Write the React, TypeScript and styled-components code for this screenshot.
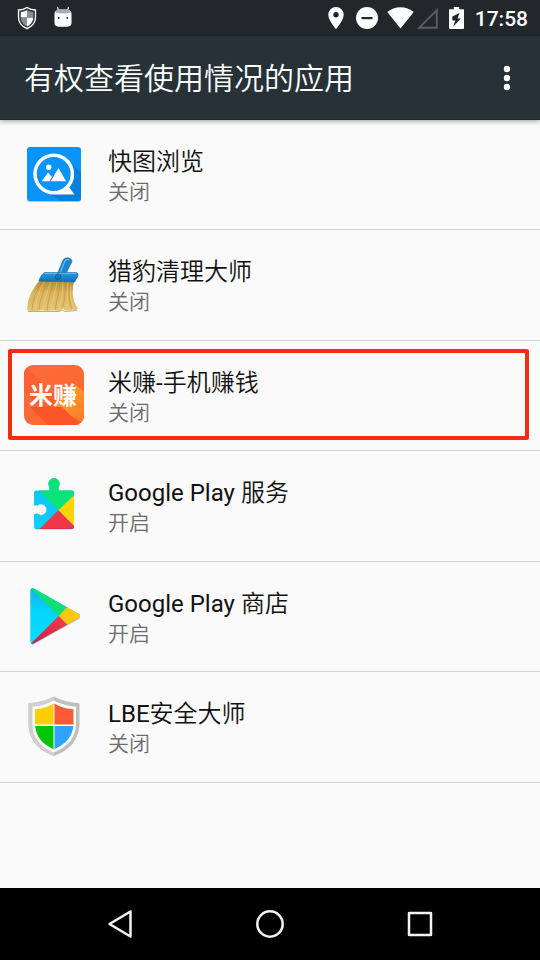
import React from 'react';
import styled, { createGlobalStyle } from 'styled-components';

const GlobalStyle = createGlobalStyle`
  *, *::before, *::after { box-sizing: border-box; }
  body {
    margin: 0;
    background: #fafafa;
    font-family: Roboto, "Noto Sans CJK SC DemiLight", "Noto Sans CJK SC", sans-serif;
  }
`;

const Screen = styled.div`
  display: flex;
  flex-direction: column;
  min-height: 100vh;
  background: #fafafa;
`;

const StatusBar = styled.div`
  display: flex;
  align-items: center;
  justify-content: space-between;
  height: 36px;
  padding: 0 12px 0 17px;
  background: #21272b;
  color: #fff;
`;

const StatusGroup = styled.div<{ $gap: number }>`
  display: flex;
  align-items: center;
  gap: ${(p) => p.$gap}px;
`;

const Clock = styled.time`
  padding-top: 2px;
  font-size: 21px;
  line-height: 24px;
  font-weight: 500;
`;

const AppBar = styled.header`
  display: flex;
  align-items: center;
  justify-content: space-between;
  height: 84px;
  padding: 0 12px 0 24px;
  background: #263238;
  border-bottom: 1px solid #1b252a;
  color: #fff;
  box-shadow: 0 1px 5px rgba(0, 0, 0, 0.4);
  z-index: 1;
`;

const Title = styled.h1`
  margin: 0;
  padding-top: 2px;
  font-size: 30px;
  line-height: 40px;
  font-weight: 350;
`;

const IconButton = styled.button`
  display: flex;
  align-items: center;
  justify-content: center;
  width: 42px;
  height: 48px;
  padding: 0;
  border: 0;
  background: none;
  color: inherit;
`;

const List = styled.ul`
  flex: 1;
  margin: 0;
  padding: 0;
  list-style: none;
`;

const Item = styled.li`
  position: relative;
  height: 110px;
  border-bottom: 1px solid #d4d4d4;
  &:nth-child(even) { height: 111px; }
`;

const Row = styled.button`
  display: flex;
  align-items: flex-start;
  gap: 24px;
  width: 100%;
  height: 100%;
  padding: 24px 24px 0;
  border: 0;
  background: none;
  font: inherit;
  text-align: left;
`;

const Labels = styled.span`
  display: flex;
  flex-direction: column;
  padding-top: 2px;
`;

const Name = styled.span`
  font-size: 24px;
  line-height: 32px;
  color: #111;
`;

const State = styled.span`
  font-size: 21px;
  line-height: 28px;
  font-weight: 350;
  color: #6c6c6c;
`;

const Highlight = styled.span`
  position: absolute;
  inset: 8px 11px 10px 8px;
  border: 4px solid #f42c12;
  border-radius: 2px;
  pointer-events: none;
`;

const NavBar = styled.nav`
  display: grid;
  grid-template-columns: repeat(3, 1fr);
  height: 72px;
  padding: 0 45px;
  background: #000;
  color: #f2f2f2;
`;

const NavButton = styled(IconButton)`
  width: 100%;
  height: 100%;
`;

const GalleryIcon = () => (
  <svg width="60" height="60" viewBox="0 0 60 60" aria-hidden="true">
    <rect x="3" y="4.5" width="54" height="53.5" rx="3" fill="#b8c4cc" />
    <rect x="3" y="3" width="54" height="54" rx="3" fill="#0a93f8" />
    <path d="M44 15.500L57 28V54a3 3 0 0 1-3 3H37L15 44Z" fill="#0881dc" />
    <circle cx="29.700" cy="30" r="18" fill="#0a93f8" />
    <path d="M29.700 9.500a20.500 20.500 0 0 1 15.500 34L50.500 50.500H29.700a20.500 20.500 0 0 1 0-41Zm0 3.500a17 17 0 1 0 0 34a17 17 0 0 0 0-34Z" fill="#fff" fillRule="evenodd" />
    <circle cx="24.700" cy="23.300" r="2.700" fill="#fff" />
    <path d="M17.700 37.300L24 28.500L28 33L25.500 37.300ZM26.700 37.300L34.500 24L42 37.300Z" fill="#fff" />
  </svg>
);

const BroomIcon = () => (
  <svg width="60" height="60" viewBox="0 0 60 60" aria-hidden="true">
    <defs>
      <linearGradient id="bristle" x1="0" y1="0" x2="0" y2="1">
        <stop offset="0" stopColor="#b98a35" />
        <stop offset="0.4" stopColor="#dcb45c" />
        <stop offset="1" stopColor="#e4c474" />
      </linearGradient>
      <linearGradient id="handle" x1="0" y1="0" x2="0" y2="1">
        <stop offset="0" stopColor="#2b9be0" />
        <stop offset="1" stopColor="#0f6fb4" />
      </linearGradient>
    </defs>
    <path d="M4 57.500H35L38 56L41 57.500L53 56.500" stroke="#b5ae9c" strokeWidth="1" fill="none" />
    <path d="M15.500 26.500L50 28C48 36 48 47 54 54.500L51 56.500L48.500 55.500L46 57L41 56.500L38.500 53.500L37 57L28 56.500L24 57L17 56.500L12 57L3.300 56.700C3 47 6 38 15.500 26.500Z" fill="url(#bristle)" />
    <g fill="none" strokeWidth="0.700" opacity="0.600">
      <path d="M18 28C12 37 9 45 8 56M24 28C19 37 16 46 15 56M30 28C27 37 24 46 23 56M36 28C35 38 33 47 31 56M41 28C42 40 40 48 38 55M46 28C44 40 45 48 48 55" stroke="#b0802c" />
      <path d="M20 28C15 37 12 46 11 56M27 28C23 37 20 46 19 56M33 28C31 37 29 46 27 56M39 28C39 38 37 47 35 56M44 28C43 40 43 48 43 56M47 32C45 42 48 50 51 55" stroke="#f8e09a" />
    </g>
    <path d="M33.500 19.500L38.500 7.500C40 3 45 3 47.300 5.500C48.500 7 47.500 9 46.500 10.500L42 19.500Z" fill="#1a86cc" stroke="#126499" strokeWidth="0.600" />
    <path d="M36.500 18L40.500 8C41.500 5.500 43 5 45 5.500" stroke="#64c0f2" strokeWidth="1.200" fill="none" />
    <path d="M20.500 18.500H52C54 19 54.500 21 53.500 23L50.500 28L15 27C16 23 18 20 20.500 18.500Z" fill="url(#handle)" stroke="#125f96" strokeWidth="0.600" />
    <path d="M20.500 19.300H52" stroke="#62bdf0" strokeWidth="1" />
    <circle cx="34" cy="22.700" r="2.700" fill="none" stroke="#0b5587" strokeWidth="0.900" />
    <path d="M32.500 23H35.500M34 21V24.500" stroke="#0b5587" strokeWidth="0.700" />
  </svg>
);

const MiText = styled.text`
  font-family: "Noto Sans CJK SC", sans-serif;
  font-size: 24px;
  font-weight: 700;
  fill: #fff;
`;

const MiIcon = () => (
  <svg width="60" height="60" viewBox="0 0 60 60" aria-hidden="true">
    <defs>
      <linearGradient id="mi" x1="0" y1="0" x2="1" y2="1">
        <stop offset="0" stopColor="#fb6a3c" />
        <stop offset="1" stopColor="#fb6a2c" />
      </linearGradient>
      <linearGradient id="miGlow" x1="0.5" y1="0.3" x2="1" y2="0.8">
        <stop offset="0" stopColor="#ff9626" />
        <stop offset="1" stopColor="#fb7d2b" />
      </linearGradient>
      <clipPath id="miClip"><rect width="60" height="60" rx="9" /></clipPath>
    </defs>
    <g clipPath="url(#miClip)">
      <rect width="60" height="60" fill="url(#mi)" />
      <path d="M0 0L60 60H34L0 26Z" fill="#fc5f30" />
      <path d="M30 42L52 20L60 27V58Z" fill="url(#miGlow)" />
      <path d="M6 42H38L56 60H24Z" fill="#fa5526" />
    </g>
    <MiText x="29" y="39" textAnchor="middle">米赚</MiText>
  </svg>
);

const PlayServicesIcon = () => (
  <svg width="60" height="60" viewBox="0 0 60 60" aria-hidden="true">
    <defs>
      <clipPath id="puzzle">
        <path d="M12 15.500H25.500V12.200A5.600 5.600 0 1 1 34.500 12.200V15.500H48a2 2 0 0 1 2 2V52a2 2 0 0 1-2 2H12a2 2 0 0 1-2-2V39L13.500 38.500A5.300 5.300 0 1 0 13.500 30.800L10 30.300V17.500a2 2 0 0 1 2-2Z" />
      </clipPath>
      <linearGradient id="psBlue" x1="0" y1="1" x2="1" y2="0">
        <stop offset="0" stopColor="#08d5fb" />
        <stop offset="1" stopColor="#18b5f0" />
      </linearGradient>
    </defs>
    <g clipPath="url(#puzzle)">
      <rect width="60" height="60" fill="url(#psBlue)" />
      <path d="M0 0H60V10.500L34.300 35.300Z" fill="#09e377" />
      <path d="M60 10.500L34.300 35.300L60 61Z" fill="#ffd304" />
      <path d="M34.300 35.300L53 54V60H9.500Z" fill="#ef3549" />
    </g>
    <path d="M11.500 54H48.500" stroke="#6e2632" strokeWidth="0.600" opacity="0.500" />
  </svg>
);

const PlayStoreIcon = () => (
  <svg width="60" height="60" viewBox="0 0 60 60" aria-hidden="true">
    <defs>
      <clipPath id="playClip">
        <path d="M6.300 4.500C6.300 2.300 8 1.700 9.800 2.600L54.500 27.700C56.500 29 56.500 31 54.500 32.300L9.800 57.400C8 58.300 6.300 57.700 6.300 55.500Z" />
      </clipPath>
      <linearGradient id="playBlue" x1="0" y1="1" x2="0" y2="0">
        <stop offset="0" stopColor="#05defd" />
        <stop offset="0.600" stopColor="#05d4fb" />
        <stop offset="1" stopColor="#16aeea" />
      </linearGradient>
      <linearGradient id="playRed" x1="1" y1="0" x2="0" y2="1">
        <stop offset="0" stopColor="#fc3b48" />
        <stop offset="1" stopColor="#c81d49" />
      </linearGradient>
    </defs>
    <path d="M8 58.700L56 32" stroke="#777" strokeWidth="0.800" opacity="0.500" />
    <g clipPath="url(#playClip)">
      <rect width="60" height="60" fill="url(#playBlue)" />
      <path d="M6.300 1.500V0H60V4L34.700 30Z" fill="#0ce077" />
      <path d="M43.500 20.700L34.700 30L43.500 39L60 33V27Z" fill="#ffc60a" />
      <path d="M34.700 30L6.300 58.300V60L20 60L43.500 39Z" fill="url(#playRed)" />
    </g>
  </svg>
);

const ShieldIcon = () => (
  <svg width="60" height="60" viewBox="0 0 60 60" aria-hidden="true">
    <defs>
      <clipPath id="shieldClip">
        <path d="M30 7.300Q39 12.800 49.500 13.300V27C49.500 40 42 48 30 53.500C18 48 11 40 11 27V13.300Q21 12.800 30 7.300Z" />
      </clipPath>
    </defs>
    <path d="M30 0.500Q41 6.500 55.500 7.300V27C55.500 43.500 46 54 30 60C14 54 4.500 43.500 4.500 27V7.300Q19 6.500 30 0.500Z" fill="#bfbfbf" />
    <path d="M30 0.500V60C14 54 4.500 43.500 4.500 27V7.300Q19 6.500 30 0.500Z" fill="#d0d0d0" />
    <path d="M30 4.500Q40 10 52 10.800V27C52 41.500 44 50.500 30 56.500C16 50.500 8.500 41.500 8.500 27V10.800Q20 10 30 4.500Z" fill="#fff" />
    <g clipPath="url(#shieldClip)">
      <rect width="29.500" height="28.500" fill="#ffce00" />
      <rect x="30.500" width="30" height="28.500" fill="#ff5a38" />
      <rect y="30" width="29.500" height="30" fill="#06c406" />
      <rect x="30.500" y="30" width="30" height="30" fill="#2fa3ff" />
    </g>
  </svg>
);

const apps = [
  { name: '快图浏览', enabled: false, Icon: GalleryIcon },
  { name: '猎豹清理大师', enabled: false, Icon: BroomIcon },
  { name: '米赚-手机赚钱', enabled: false, Icon: MiIcon, highlighted: true },
  { name: 'Google Play 服务', enabled: true, Icon: PlayServicesIcon },
  { name: 'Google Play 商店', enabled: true, Icon: PlayStoreIcon },
  { name: 'LBE安全大师', enabled: false, Icon: ShieldIcon },
];

const StatusShield = () => (
  <svg width="20" height="24" viewBox="0 0 20 24" aria-hidden="true">
    <path d="M10 1.500Q14 4 18.500 4V11C18.500 17 15 20.500 10 22.700C5 20.500 1.500 17 1.500 11V4Q6 4 10 1.500Z" fill="#33383b" stroke="#fff" strokeWidth="1.300" />
    <path d="M10 4V11.500H3.800V6Q7 5.800 10 4ZM10 11.500H16.200C16 16 13.500 18.700 10 20.500Z" fill="#fff" />
    <path d="M10 4V11.500H16.200V6Q13 5.800 10 4ZM10 11.500H3.800C4 16 6.500 18.700 10 20.500Z" fill="#8b8f91" />
  </svg>
);

const StatusAndroid = () => (
  <svg width="18" height="24" viewBox="0 0 18 24" aria-hidden="true">
    <path d="M4.500 5L3.500 0.800M13.500 5L14.500 0.800" stroke="#fff" strokeWidth="1.200" />
    <path d="M0.500 8C0.500 4.500 3 3.500 9 3.500S17.500 4.500 17.500 8V17C17.500 19.500 15.500 20.700 13 20.700H5C2.500 20.700 0.500 19.500 0.500 17Z" fill="#fff" />
    <path d="M1 6.500C2 4 4.500 3.500 9 3.500S16 4 17 6.500Q9 8.500 1 6.500Z" fill="#a9acae" />
    <circle cx="4.800" cy="12" r="0.900" fill="#222" />
    <circle cx="13.200" cy="12" r="0.900" fill="#222" />
  </svg>
);

const PinIcon = () => (
  <svg width="16" height="22" viewBox="0 0 16 22" aria-hidden="true">
    <path d="M8 0A7.700 7.700 0 0 0 0.300 7.700C0.300 13.500 8 22 8 22S15.700 13.500 15.700 7.700A7.700 7.700 0 0 0 8 0Zm0 5a2.700 2.700 0 1 1 0 5.400a2.700 2.700 0 0 1 0-5.400Z" fill="#fff" fillRule="evenodd" />
  </svg>
);

const DndIcon = () => (
  <svg width="22" height="22" viewBox="0 0 22 22" aria-hidden="true">
    <circle cx="11" cy="11" r="11" fill="#fff" />
    <rect x="5.500" y="10" width="11" height="2.200" fill="#21272b" />
  </svg>
);

const WifiIcon = () => (
  <svg width="27" height="22" viewBox="0 0 27 22" aria-hidden="true">
    <path d="M13.500 21.500L0.300 5C4 2 8.500 0.300 13.500 0.300S23 2 26.700 5Z" fill="#fff" />
  </svg>
);

const SignalIcon = () => (
  <svg width="21" height="22" viewBox="0 0 21 22" aria-hidden="true">
    <path d="M2.300 20.700L19.800 3V20.700Z" fill="none" stroke="#595e61" strokeWidth="1.900" />
  </svg>
);

const BatteryIcon = () => (
  <svg width="15" height="22" viewBox="0 0 15 22" aria-hidden="true">
    <path d="M4.800 0H10.200V2.300H14.200a0.800 0.800 0 0 1 0.800 0.800V21.200a0.800 0.800 0 0 1-0.800 0.800H0.800A0.800 0.800 0 0 1 0 21.200V3.100a0.800 0.800 0 0 1 0.800-0.800H4.800Z" fill="#fff" />
    <path d="M10.500 6L3.300 9.500V13.500H6.300L4.300 19.500L12 11.500H8.500Z" fill="#21272b" />
  </svg>
);

export default function App() {
  return (
    <Screen>
      <GlobalStyle />
      <StatusBar>
        <StatusGroup $gap={17}>
          <StatusShield />
          <StatusAndroid />
        </StatusGroup>
        <StatusGroup $gap={11}>
          <StatusGroup $gap={9}>
            <StatusGroup $gap={12}>
              <PinIcon />
              <DndIcon />
            </StatusGroup>
            <StatusGroup $gap={3}>
              <WifiIcon />
              <SignalIcon />
            </StatusGroup>
          </StatusGroup>
          <BatteryIcon />
          <Clock>17:58</Clock>
        </StatusGroup>
      </StatusBar>
      <AppBar>
        <Title>有权查看使用情况的应用</Title>
        <IconButton type="button" aria-label="更多选项">
          <svg width="8" height="26" viewBox="0 0 8 26" fill="#fff" aria-hidden="true">
            <circle cx="4" cy="4" r="3.200" />
            <circle cx="4" cy="13" r="3.200" />
            <circle cx="4" cy="22" r="3.200" />
          </svg>
        </IconButton>
      </AppBar>
      <List>
        {apps.map(({ name, enabled, Icon, highlighted }) => (
          <Item key={name}>
            <Row type="button">
              <Icon />
              <Labels>
                <Name>{name}</Name>
                <State>{enabled ? '开启' : '关闭'}</State>
              </Labels>
            </Row>
            {highlighted && <Highlight />}
          </Item>
        ))}
      </List>
      <NavBar>
        <NavButton type="button" aria-label="返回">
          <svg width="28" height="30" viewBox="0 0 28 30" fill="none" stroke="currentColor" strokeWidth="2.500" strokeLinejoin="round" aria-hidden="true">
            <path d="M24.500 2.500V27.500L3.500 15Z" />
          </svg>
        </NavButton>
        <NavButton type="button" aria-label="主屏幕">
          <svg width="30" height="30" viewBox="0 0 30 30" fill="none" stroke="currentColor" strokeWidth="2.500" aria-hidden="true">
            <circle cx="15" cy="15" r="12.700" />
          </svg>
        </NavButton>
        <NavButton type="button" aria-label="最近任务">
          <svg width="26" height="26" viewBox="0 0 26 26" fill="none" stroke="currentColor" strokeWidth="2.500" strokeLinejoin="round" aria-hidden="true">
            <rect x="2" y="2" width="22" height="22" />
          </svg>
        </NavButton>
      </NavBar>
    </Screen>
  );
}
